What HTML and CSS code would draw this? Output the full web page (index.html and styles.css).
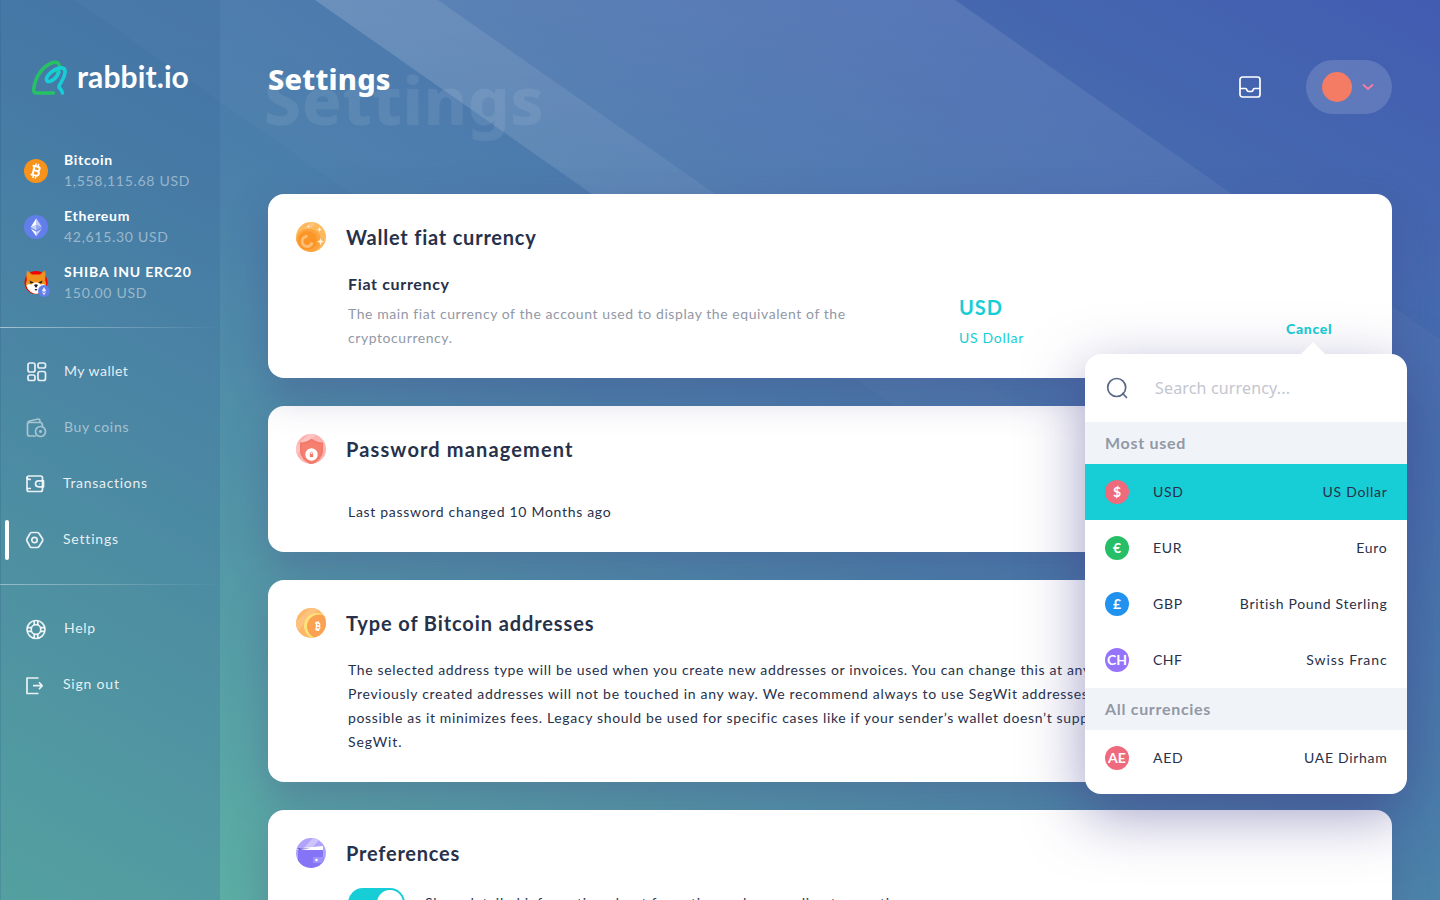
FILE: index.html
```html
<!DOCTYPE html>
<html lang="en">
<head>
<meta charset="utf-8">
<title>Settings</title>
<link rel="stylesheet" href="styles.css">
</head>
<body>
<svg class="rays" viewBox="0 0 1440 900" aria-hidden="true">
  <defs>
    <linearGradient id="ray" x1="0" y1="0" x2="0" y2="1"><stop offset="0" stop-color="#fff" stop-opacity=".1"/><stop offset=".5" stop-color="#fff" stop-opacity="0"/></linearGradient>
  </defs>
  <path d="M75 0H315L1600 900H1361Z" fill="url(#ray)" opacity=".3"/>
  <path d="M315 0H438L1723 900H1600Z" fill="url(#ray)"/>
  <path d="M315 0H955L2240 900H1600Z" fill="url(#ray)"/>
</svg>
<div class="app">
  <aside class="side">
    <a class="logo">
      <svg width="36" height="36" viewBox="0 0 36 36" fill="none" stroke-width="3.6" stroke-linecap="round" stroke-linejoin="round">
        <path d="M21.500 33H5Q1 33 1.800 28.500C3.500 17 10 6 21 2.500Q27 1 27.500 6.500Q27 10 25.500 12" stroke="#26c165"/>
        <path d="M30.500 33Q30 30 27 27.500Q27 25 29 22.500C33 16 35 9 30.500 8C25 7 15 14 14.500 19Q14.500 22 17.500 21.500C21 20.500 25 17 27 12" stroke="#17cdd6"/>
      </svg>
      <span class="logo-text">rabbit.io</span>
    </a>
    <ul class="coins">
      <li class="coin"><svg width="24" height="24" viewBox="0 0 24 24"><circle cx="12" cy="12" r="12" fill="#f7931a"/><g transform="rotate(13 12 12)" fill="none" stroke="#fff" stroke-width="2"><path d="M9.500 7V17M7.500 7.500h5.500a2.100 2.100 0 0 1 0 4.200H10M13 11.700a2.400 2.400 0 0 1 0 4.800H7.500"/><path stroke-width="1.400" d="M10.500 4.500V7.500M13 4.500V7.500M10.500 16.500v3M13 16.500v3"/></g></svg>
        <div><b>Bitcoin</b><span>1,558,115.68 USD</span></div></li>
      <li class="coin"><svg width="24" height="24" viewBox="0 0 24 24"><circle cx="12" cy="12" r="12" fill="#627eea"/><path d="M12.300 3.200 6.700 12.300l5.600-2.500z" fill="#fff"/><path d="M12.300 3.200 18 12.300l-5.700-2.500z" fill="#fff" opacity=".6"/><path d="M12.300 9.800 6.700 12.300l5.600 3.300z" fill="#fff" opacity=".65"/><path d="M12.300 9.800 18 12.300l-5.700 3.300z" fill="#fff" opacity=".3"/><path d="M6.700 13.500l5.600 3.300v4.400z" fill="#fff"/><path d="M18 13.500l-5.700 3.300v4.400z" fill="#fff" opacity=".6"/></svg>
        <div><b>Ethereum</b><span>42,615.30 USD</span></div></li>
      <li class="coin"><svg width="28" height="28" viewBox="0 0 28 28"><circle cx="12" cy="13.500" r="11.500" fill="#f00500"/><path d="M3 1.500Q2 6 2.800 11L1.800 15Q3 21 8 23.500L12 25l4-1.500Q21 21 22.200 15L21.200 11Q22 6 21 1.500L16 5.500H8Z" fill="#f0931e"/><path d="M2.500 16.500Q4 14 7.500 15.500L10 13.500h4L16.500 15.500Q20 14 21.500 16.500Q20.500 21 16 23.500Q12 26 8 23.500Q3.500 21 2.500 16.500Z" fill="#fff"/><path d="m5.500 11.500 4.500 2.300-3.500.7zM18.500 11.500 14 13.800l3.500.7z" fill="#23201f"/><path d="M10 16q2-1.500 4 0l-1.500 2.500h-1zM10.500 20h3l-1.500 2z" fill="#23201f"/><circle cx="20" cy="22" r="6" fill="#627eea"/><path d="m20 18-2.200 3.800 2.200 1.300 2.200-1.300zM17.800 22.800 20 26.200l2.200-3.400-2.200 1.200z" fill="#fff" opacity=".85"/></svg>
        <div><b class="ls8">SHIBA INU ERC20</b><span>150.00 USD</span></div></li>
    </ul>
    <nav class="menu">
      <a><svg width="24" height="24" viewBox="0 0 24 24"><rect x="4" y="3" width="7" height="9" rx="2"/><rect x="14" y="3" width="7.500" height="5" rx="1.800"/><rect x="4" y="15" width="7" height="5.500" rx="1.800"/><rect x="14" y="11.500" width="7.500" height="9" rx="2"/></svg><span class="ls5">My wallet</span></a>
      <a class="dim"><svg width="24" height="24" viewBox="0 0 24 24"><path d="M12 20H5.500a2 2 0 0 1-2-2V7.500q0-2 2-2.500L14.500 3q1.500 0 1.500 3M3.500 7.500q.5-1 2-1H16q2.500 0 2.500 3v1"/><circle cx="16.500" cy="15.500" r="5"/><path d="M15 15.500h3M16.500 14v3"/></svg><span>Buy coins</span></a>
      <a class="near"><svg width="24" height="24" viewBox="0 0 24 24"><rect x="4" y="4" width="15.500" height="15.500" rx="2"/><path d="M4 5q0 2.500 4 2.500M4 16.500h4M20.500 8.800H15.500a3 3 0 0 0 0 6h5zM16 11.800h.5"/></svg><span>Transactions</span></a>
      <a class="near active"><svg width="24" height="24" viewBox="0 0 24 24"><path d="M8.500 4.500h6q1.200 0 1.700 1.200l3.300 5q.5 1.300 0 2.300l-3.300 5.300q-.7 1.200-1.700 1.200h-6q-1 0-1.600-1.200L4 13q-.6-1 0-2.300l2.900-5q.6-1.200 1.600-1.200z"/><circle cx="11.500" cy="12" r="2.700"/></svg><span class="ls8">Settings</span></a>
    </nav>
    <nav class="menu">
      <a><svg width="24" height="24" viewBox="0 0 24 24"><circle cx="12" cy="12.500" r="9"/><circle cx="12" cy="12.500" r="4.800"/><path d="M10.200 3.800v4.200M13.800 3.800v4.200M10.200 17v4.200M13.800 17v4.200M3.300 10.700h4.200M3.300 14.300h4.200M16.500 10.700h4.200M16.500 14.300h4.200"/></svg><span>Help</span></a>
      <a class="near"><svg width="24" height="24" viewBox="0 0 24 24"><path d="M15.500 5H4v15.500h11.500M10 12.700h9M16 9.200l3.200 3.500-3.200 3.500"/></svg><span class="ls8">Sign out</span></a>
    </nav>
  </aside>

  <main class="main">
    <header class="top">
      <div class="heading"><h1>Settings</h1><span class="ghost" aria-hidden="true">Settings</span></div>
      <svg class="inbox" width="24" height="24" viewBox="0 0 24 24" fill="none" stroke="#fff" stroke-width="1.700"><rect x="2" y="2" width="20" height="20" rx="2.500"/><path d="M2 13.500h5.500q1 0 1.300 1.300q.4 1.700 2 1.700h2.400q1.600 0 2-1.700q.3-1.300 1.300-1.300H22"/></svg>
      <button class="account"><i></i><svg width="12" height="8" viewBox="0 0 12 8" fill="none" stroke="#f47ca0" stroke-width="2"><path d="M1 1.500 6 6l5-4.500"/></svg></button>
    </header>

    <section class="card first">
      <div class="card-head">
        <svg width="30" height="30" viewBox="0 0 30 30"><defs><clipPath id="c"><circle cx="15" cy="15" r="15"/></clipPath></defs><g clip-path="url(#c)"><path d="M0 0h30v30H0z" fill="#fdb95e"/><path d="M0 15 15 0h6L0 21z" fill="#fdc67c"/><circle cx="12.500" cy="19" r="12.500" fill="#fda43c"/><circle cx="11.500" cy="18.500" r="9.500" fill="#fb9528"/><path d="M12 13a6.500 6.500 0 1 0 5.500 8l-3-1a3.500 3.500 0 1 1-3.500-4z" fill="#fdbf75"/><path d="m24.500 16 1 2.600 2.500 1-2.500 1-1 2.600-1-2.600-2.500-1 2.500-1zM23.500 5l.7 1.800 1.800.7-1.800.7-.7 1.800-.7-1.800-1.800-.7 1.800-.7zM12.500 3l.4 1 1 .5-1 .5-.4 1-.4-1-1-.5 1-.5z" fill="#fff3e0"/></g></svg>
        <h2>Wallet fiat currency</h2>
      </div>
      <div class="fiat">
        <div class="fiat-text"><h3>Fiat currency</h3>
          <p>The main fiat currency of the account used to display the equivalent of the<br>cryptocurrency.</p></div>
        <div class="fiat-value"><b>USD</b><span>US Dollar</span></div>
        <div class="fiat-action"><span class="cancel">Cancel</span>
          <div class="picker">
            <label class="search"><svg width="24" height="24" viewBox="0 0 24 24" fill="none" stroke="#5a6784" stroke-width="1.700" stroke-linecap="round"><circle cx="11.700" cy="11.500" r="9"/><path d="m17.700 17.500 3.800 4"/></svg><span>Search currency...</span></label>
            <h4>Most used</h4>
            <div class="row on"><i class="r">$</i><span>USD</span><span class="nm">US Dollar</span></div>
            <div class="row"><i class="g">€</i><span>EUR</span><span class="nm">Euro</span></div>
            <div class="row"><i class="b">£</i><span>GBP</span><span class="nm ls7">British Pound Sterling</span></div>
            <div class="row"><i class="p">CH</i><span class="ls5">CHF</span><span class="nm ls9">Swiss Franc</span></div>
            <h4>All currencies</h4>
            <div class="row"><i class="r">AE</i><span>AED</span><span class="nm">UAE Dirham</span></div>
          </div>
        </div>
      </div>
    </section>

    <section class="card">
      <div class="card-head">
        <svg width="30" height="30" viewBox="0 0 30 30"><g clip-path="url(#c)"><path d="M0 0h30v30H0z" fill="#fcb3b0"/><path d="M0 13 13 0h8L0 21z" fill="#fdc4c1"/><path d="M15.500 4.500q5 4 11.500 4V18q-1.500 8-11.500 13Q5.500 26 4 18V8.500q6.500 0 11.500-4z" fill="#f3796b"/><path d="M15.500 7.500q4 3 9.500 3V18q-1.500 7-9.500 11Q7.500 25 6 18v-7.500q5.500 0 9.500-3z" fill="#f5806f"/><circle cx="15.500" cy="20.500" r="6.200" fill="#fff"/><path d="M13.800 20h3.400v3h-3.400z" fill="#f3796b"/><path d="M14.400 20v-1.300q1.100-1.200 2.200 0V20" fill="none" stroke="#f3796b" stroke-width=".7"/></g></svg>
        <h2 class="ls12">Password management</h2>
      </div>
      <p class="body gap-l">Last password changed 10 Months ago</p>
    </section>

    <section class="card">
      <div class="card-head">
        <svg width="30" height="30" viewBox="0 0 30 30"><g clip-path="url(#c)"><path d="M0 0h30v30H0z" fill="#fdb768"/><path d="M0 14 14 0h10L0 24z" fill="#fdc37e"/><circle cx="21" cy="18" r="13" fill="#fde37a"/><circle cx="23" cy="18.500" r="12" fill="#fba252"/><path d="M20.500 14.500v7M19 15h3.800q2 1.500 0 3h-2M22.800 18q2.200 1.600 0 3.200H19M21 13.500v1.500M22.500 13.500v1.500M21 21.500V23M22.500 21.500V23" fill="none" stroke="#fff" stroke-width="1.300"/></g></svg>
        <h2 class="ls9">Type of Bitcoin addresses</h2>
      </div>
      <p class="body gap-s"><span class="ls6">The selected address type will be used when you create new addresses or invoices. You can change this at any time.</span><br>Previously created addresses will not be touched in any way. We recommend always to use SegWit addresses if<br><span class="ls6">possible as it minimizes fees. Legacy should be used for specific cases like if your sender’s wallet doesn’t support</span><br><span class="ls9">SegWit.</span></p>
    </section>

    <section class="card">
      <div class="card-head">
        <svg width="30" height="30" viewBox="0 0 30 30"><g clip-path="url(#c)"><path d="M0 0h30v30H0z" fill="#b0a3fb"/><path d="M5 13 17 0h8L13 13z" fill="#cdc4fd"/><path d="M1 10.500 27 8v4H2z" fill="#fff"/><path d="M1 10q8 .5 13 .5L3 12z" fill="#5d4fd0"/><path d="M2 12h25v18H4Q2 28 2 24z" fill="#8575f6"/><rect x="17" y="19" width="11" height="6" fill="#9d90fa"/><circle cx="20.500" cy="22" r="1.300" fill="#fff"/></g></svg>
        <h2>Preferences</h2>
      </div>
      <div class="pref"><span class="toggle"></span><span>Show detailed information about formation and responding transactions</span></div>
    </section>
  </main>
</div>
</body>
</html>
```
FILE: styles.css
```css
* { box-sizing: border-box; }
body { margin: 0; height: 900px; overflow: hidden; font: 14px/24px Lato, sans-serif; letter-spacing: .7px; color: #27314a; background: linear-gradient(29deg, #5fb6a3 0%, #4b81aa 49%, #425cb1 100%); }
h1, h2, h3, h4, p, ul { margin: 0; padding: 0; }
.rays { position: absolute; inset: 0; width: 1440px; height: 900px; }
.app { position: relative; display: grid; grid-template-columns: 220px 1fr; height: 900px; overflow: hidden; }
.ls5 { letter-spacing: .5px; }
.ls6 { letter-spacing: .66px; }
.ls7 { letter-spacing: .68px; }
.ls8 { letter-spacing: .81px; }
.ls9 { letter-spacing: .92px; }

.side { background: rgba(58, 105, 155, .28); color: rgba(255, 255, 255, .88); box-shadow: inset 1px 0 rgba(40, 80, 130, .2); padding-top: 60px; }
.logo { display: flex; gap: 9px; align-items: center; height: 36px; padding-left: 32px; }
.logo-text { margin-top: -4px; font-size: 30px; font-weight: 700; color: #fff; letter-spacing: .1px; }
.coins { list-style: none; margin-top: 53px; padding-left: 24px; display: grid; gap: 14px; height: 179px; align-content: start; border-bottom: 1px solid; border-image: linear-gradient(90deg, rgba(255, 255, 255, .5), transparent) 1; }
.coin { display: grid; grid-template-columns: 40px 1fr; align-items: center; height: 42px; }
.coin svg { position: relative; top: 1px; }
.coin div { display: grid; line-height: 21px; white-space: nowrap; }
.coin b { color: #fff; }
.coin span { color: rgba(255, 255, 255, .45); }
.menu { padding: 16px 0 16px 24px; height: 257px; border-bottom: 1px solid; border-image: linear-gradient(90deg, rgba(255, 255, 255, .4), transparent) 1; }
.menu + .menu { border: 0; }
.menu a { position: relative; display: flex; align-items: center; gap: 16px; height: 56px; }
.menu span { margin-top: -2px; }
.menu .near { gap: 16px; margin-left: -1px; }
.menu svg { fill: none; stroke: currentColor; stroke-width: 1.7; stroke-linejoin: round; }
.menu .dim { color: rgba(255, 255, 255, .5); }
.active::before { content: ""; position: absolute; left: -18px; top: 8px; width: 4px; height: 40px; border-radius: 2px; background: #fff; }

.main { padding: 60px 48px 0; }
.top { display: flex; align-items: flex-start; height: 134px; }
.heading { position: relative; flex: 1; font-family: "Noto Sans", sans-serif; letter-spacing: 0; }
h1 { margin-top: -1px; font-size: 29px; line-height: 40px; font-weight: 800; letter-spacing: .2px; color: #fff; }
.ghost { position: absolute; left: -4px; top: -3px; font-size: 66px; line-height: 84px; font-weight: 800; letter-spacing: .6px; color: rgba(255, 255, 255, .08); }
.inbox { margin: 15px 44px 0 0; }
.account { width: 86px; height: 54px; border: 0; border-radius: 27px; background: rgba(255, 255, 255, .15); display: flex; align-items: center; gap: 10px; padding: 0 16px; }
.account i { width: 30px; height: 30px; border-radius: 50%; background: #f47b64; }

.card { position: relative; background: #fff; border-radius: 16px; padding: 28px; margin-bottom: 28px; box-shadow: 0 16px 40px rgba(68, 64, 130, .3); }
.first { z-index: 2; height: 184px; }
.card-head { display: flex; align-items: center; gap: 20px; height: 30px; }
h2 { font-size: 20px; letter-spacing: .78px; }
h2.ls12 { letter-spacing: 1.14px; }
h2.ls9 { letter-spacing: .9px; }
.fiat { display: grid; grid-template-columns: 611px 1fr auto; padding: 21px 31px 0 52px; }
h3 { font-size: 16px; line-height: 22px; margin-bottom: 7px; letter-spacing: .66px; }
.fiat-text p { color: #9298a6; letter-spacing: .57px; }
.fiat-value { display: flex; flex-direction: column; padding-top: 22px; gap: 7px; color: #17cdd6; }
.fiat-value b { font-size: 20px; letter-spacing: .98px; }
.fiat-action { position: relative; width: 47px; padding-top: 44px; }
.cancel { color: #17cdd6; font-weight: 900; }
.picker { position: absolute; left: -201px; top: 81px; width: 322px; height: 440px; border-radius: 16px; background: #fff; box-shadow: 0 20px 60px rgba(64, 60, 140, .5); }
.picker::before { content: ""; position: absolute; left: 216px; top: -12px; border: 12px solid transparent; border-top: 0; border-bottom-color: #fff; }
.search { display: flex; align-items: center; gap: 26px; height: 68px; padding-left: 20px; font: 16px "Noto Sans", sans-serif; letter-spacing: .16px; color: #c3c6cf; }
h4 { height: 42px; line-height: 41px; padding-left: 20px; font-size: 16px; color: #9298a6; background: #f0f4f8; }
.row { display: grid; grid-template-columns: 24px 60px 1fr; column-gap: 24px; align-items: center; height: 56px; padding: 0 20px; }
.row.on { background: #17cdd6; }
.row i { width: 24px; height: 24px; border-radius: 50%; font: 700 14px/24px Lato, sans-serif; letter-spacing: 0; text-align: center; color: #fff; }
.r { background: #ee6a7c; }
.g { background: #26bf68; }
.b { background: #2193ef; }
.p { background: #9673fb; }
.nm { justify-self: end; margin-left: -80px; margin-right: -.5px; white-space: nowrap; }
.body { padding-left: 52px; white-space: nowrap; }
.gap-l { margin-top: 36px; }
.gap-s { margin-top: 20px; }
.pref { display: flex; gap: 20px; margin: 20px 0 0 52px; line-height: 30px; }
.toggle { width: 57px; height: 30px; border-radius: 15px; background: radial-gradient(circle at 42px 15px, #fff 12.500px, #17cdd6 13.500px); }
```
